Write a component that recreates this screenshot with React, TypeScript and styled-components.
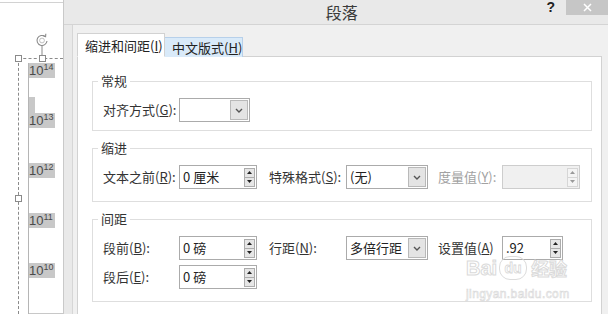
import * as React from 'react';
import styled, { createGlobalStyle } from 'styled-components';

const GlobalStyle = createGlobalStyle`
  html, body {
    margin: 0;
    padding: 0;
  }
  body {
    width: 608px;
    height: 314px;
    overflow: hidden;
    background: #fff;
    font-family: "Noto Sans CJK SC", "Noto Sans", sans-serif;
    color: #333;
  }
`;

const Screen = styled.div`
  display: flex;
  height: 314px;
  overflow: hidden;
`;

/* left: slide thumbnail pane */
const SlidePane = styled.div`
  position: relative;
  width: 63px;
  flex-shrink: 0;
  border-right: 1px solid #c9c9c9;
  background: #fff;
  overflow: hidden;
`;

const PrevSlideEdge = styled.div`
  height: 2px;
  border-bottom: 1px solid #d2d2d2;
`;

const AxisColumn = styled.div`
  margin: 60px 0 0 28px;
  border-left: 1px solid #b5b5b5;
  display: flex;
  flex-direction: column;
`;

const Tick = styled.div`
  height: 50px;
  display: flex;
  flex-direction: column;
  justify-content: space-between;
  align-items: flex-start;
`;

const Power = styled.span`
  background: #c8c8c8;
  color: #4a4a4a;
  font-family: "Liberation Sans", sans-serif;
  font-size: 13px;
  line-height: 15px;
  padding-right: 2px;

  sup {
    font-size: 9px;
    vertical-align: 5px;
    line-height: 0;
  }
`;

const Stub = styled.span`
  width: 6px;
  height: 16px;
  background: #c8c8c8;
`;

const BottomBlock = styled.div`
  height: 6px;
  background: #c8c8c8;
`;

const DashH = styled.div`
  position: absolute;
  left: 18px;
  right: 0;
  top: 58px;
  border-top: 1px dashed #8a8a8a;
`;

const DashV = styled.div`
  position: absolute;
  left: 18px;
  top: 58px;
  bottom: 0;
  border-left: 1px dashed #8a8a8a;
`;

const Handle = styled.div<{ $x: number; $y: number }>`
  position: absolute;
  left: ${(p) => p.$x - 3}px;
  top: ${(p) => p.$y - 3}px;
  width: 5px;
  height: 5px;
  background: #fff;
  border: 1px solid #8a8a8a;
`;

const RotateHandle = styled.svg`
  position: absolute;
  left: 35px;
  top: 33px;
`;

/* dialog */
const Dialog = styled.div`
  flex: 1;
  display: flex;
  flex-direction: column;
  background: #e9e9e9;
`;

const TitleBar = styled.div`
  height: 24px;
  flex-shrink: 0;
  display: flex;
  align-items: flex-start;
  border-bottom: 1px solid #d4d4d4;
`;

const Title = styled.div`
  flex: 1;
  text-align: center;
  padding-left: 73px;
  font-size: 16px;
  line-height: 24px;
  color: #3a3a3a;
`;

const Help = styled.div`
  font-family: "Liberation Sans", sans-serif;
  font-weight: bold;
  font-size: 14px;
  line-height: 15px;
  color: #222;
  margin-right: 11px;
`;

const CloseButton = styled.div`
  width: 42px;
  height: 15px;
  background: #c6c6c6;
  color: #fff;
  display: flex;
  align-items: center;
  justify-content: center;
`;

const Body = styled.div`
  flex: 1;
  margin-left: 8px;
  display: flex;
  flex-direction: column;
  background: #f0f0f0;
  border-left: 1px solid #d6d6d6;
  padding: 8px 6px 0 4px;
  min-height: 0;
`;

const Tabs = styled.div`
  display: flex;
  align-items: flex-end;
  height: 24px;
  margin-bottom: -1px;
  position: relative;
  z-index: 1;
`;

const Tab = styled.div<{ $active?: boolean }>`
  box-sizing: border-box;
  width: ${(p) => (p.$active ? 88 : 78)}px;
  height: ${(p) => (p.$active ? 24 : 20)}px;
  padding-left: 7px;
  font-size: 13px;
  line-height: ${(p) => (p.$active ? 24 : 19)}px;
  color: #222;
  white-space: nowrap;
  background: ${(p) => (p.$active ? '#fff' : '#d9eaf9')};
  border: 1px solid ${(p) => (p.$active ? '#d2d2d2' : '#b7d0ea')};
  border-bottom: ${(p) => (p.$active ? '1px solid #fff' : 'none')};
  border-left: ${(p) => (p.$active ? '1px solid #d2d2d2' : 'none')};
`;

const Panel = styled.div`
  position: relative;
  flex: 1;
  background: #fff;
  border: 1px solid #d2d2d2;
  border-bottom: none;
  padding: 16px 9px 0 14px;
`;

const Group = styled.fieldset<{ $bottom: number }>`
  margin: 0 0 9px;
  padding: 9px 8px ${(p) => p.$bottom}px 10px;
  border: 1px solid #dedede;
  min-width: 0;
`;

const Legend = styled.legend`
  margin-left: -5px;
  padding: 0 3px;
  font-size: 13px;
  line-height: 16px;
  color: #333;
`;

const Rows = styled.div`
  display: grid;
  row-gap: 5px;
`;

const Row = styled.div`
  display: grid;
  grid-template-columns: 76px 90px 77px 92px 64px auto;
  align-items: center;
  height: 24px;
`;

const Label = styled.span<{ $disabled?: boolean }>`
  font-size: 13px;
  line-height: 16px;
  white-space: nowrap;
  color: ${(p) => (p.$disabled ? '#a2a2a2' : '#333')};
`;

const Field = styled.div<{ $width: number; $disabled?: boolean }>`
  box-sizing: border-box;
  width: ${(p) => p.$width}px;
  height: 24px;
  display: flex;
  align-items: center;
  border: 1px solid ${(p) => (p.$disabled ? '#cdcdcd' : '#ababab')};
  background: ${(p) => (p.$disabled ? '#f0f0f0' : '#fff')};
`;

const FieldText = styled.span`
  flex: 1;
  padding-left: 3px;
  font-size: 13px;
  line-height: 16px;
  color: #222;
  white-space: nowrap;
`;

const SpinButtons = styled.div`
  display: flex;
  flex-direction: column;
  margin-right: 1px;
`;

const SpinButton = styled.div<{ $disabled?: boolean }>`
  box-sizing: border-box;
  width: 11px;
  height: 10px;
  display: flex;
  align-items: center;
  justify-content: center;
  background: ${(p) => (p.$disabled ? '#f4f4f4' : '#e6e6e6')};
  border: 1px solid ${(p) => (p.$disabled ? '#d6d6d6' : '#acacac')};

  & + & {
    margin-top: -1px;
  }
`;

const ArrowBox = styled.div`
  box-sizing: border-box;
  width: 18px;
  height: 20px;
  margin-right: 1px;
  display: flex;
  align-items: center;
  justify-content: center;
  background: #e4e4e4;
  border: 1px solid #b9b9b9;
`;

const Watermark = styled.div`
  position: absolute;
  left: 388px;
  top: 199px;
  display: flex;
  flex-direction: column;
  align-items: flex-start;
  pointer-events: none;
  color: rgba(255, 255, 255, 0.7);
  -webkit-text-stroke: 1px #dadada;
`;

const Brand = styled.div`
  display: flex;
  align-items: center;
  gap: 2px;
  font-family: "Liberation Sans", sans-serif;
  font-size: 20px;
  line-height: 22px;
  font-weight: bold;
`;

const Paw = styled.span`
  display: inline-flex;
  align-items: center;
  justify-content: center;
  width: 26px;
  height: 22px;
  border: 1px solid #dcdcdc;
  border-radius: 11px;
  font-size: 14px;
  -webkit-text-stroke: 0.8px #d8d8d8;
`;

const BrandCjk = styled.span`
  font-family: "Noto Sans CJK SC", sans-serif;
  font-size: 18px;
  margin-left: 2px;
`;

const Url = styled.div`
  margin-top: 8px;
  font-family: "Liberation Sans", sans-serif;
  font-size: 12px;
  line-height: 12px;
  letter-spacing: 0.4px;
  -webkit-text-stroke: 0.6px #d8d8d8;
`;

const Chevron = () => (
  <svg width="8" height="5" viewBox="0 0 8 5">
    <polyline points="1,1 4,4 7,1" fill="none" stroke="#555" strokeWidth="1.4" />
  </svg>
);

const Triangle = ({ up, disabled }: { up?: boolean; disabled?: boolean }) => (
  <svg width="5" height="3" viewBox="0 0 5 3">
    <polygon points={up ? '0,3 2.5,0 5,3' : '0,0 2.5,3 5,0'} fill={disabled ? '#9a9a9a' : '#222'} />
  </svg>
);

const Spin = ({ value, width, disabled }: { value?: string; width: number; disabled?: boolean }) => (
  <Field $width={width} $disabled={disabled}>
    <FieldText>{value}</FieldText>
    <SpinButtons>
      <SpinButton $disabled={disabled}>
        <Triangle up disabled={disabled} />
      </SpinButton>
      <SpinButton $disabled={disabled}>
        <Triangle disabled={disabled} />
      </SpinButton>
    </SpinButtons>
  </Field>
);

const Select = ({ value, width }: { value?: string; width: number }) => (
  <Field $width={width}>
    <FieldText>{value}</FieldText>
    <ArrowBox>
      <Chevron />
    </ArrowBox>
  </Field>
);

const powers = ['14', '13', '12', '11', '10'];

export default function App() {
  return (
    <>
      <GlobalStyle />
      <Screen>
        <SlidePane>
          <PrevSlideEdge />
          <AxisColumn>
            {powers.map((p, i) => (
              <Tick key={p}>
                <Power>
                  10<sup>{p}</sup>
                </Power>
                {i === 0 ? <Stub /> : null}
              </Tick>
            ))}
            <BottomBlock />
          </AxisColumn>
          <DashH />
          <DashV />
          <RotateHandle width="14" height="25" viewBox="0 0 14 25">
            <path d="M10.2 3.6 A5 5 0 1 0 12 8" fill="none" stroke="#8a8a8a" strokeWidth="1.1" />
            <polyline points="7.8,2.6 10.6,3.8 10.8,0.8" fill="none" stroke="#8a8a8a" strokeWidth="1.1" />
            <circle cx="7" cy="7.5" r="2.4" fill="none" stroke="#b0b0b0" strokeWidth="0.8" />
            <line x1="7" y1="12.5" x2="7" y2="23" stroke="#8a8a8a" strokeWidth="1" />
          </RotateHandle>
          <Handle $x={18} $y={58} />
          <Handle $x={42} $y={58} />
          <Handle $x={18} $y={198} />
        </SlidePane>

        <Dialog>
          <TitleBar>
            <Title>段落</Title>
            <Help>?</Help>
            <CloseButton>
              <svg width="9" height="9" viewBox="0 0 9 9">
                <path d="M1 1 L8 8 M8 1 L1 8" stroke="#fff" strokeWidth="1.5" />
              </svg>
            </CloseButton>
          </TitleBar>

          <Body>
            <Tabs>
              <Tab $active>
                缩进和间距(<u>I</u>)
              </Tab>
              <Tab>
                中文版式(<u>H</u>)
              </Tab>
            </Tabs>

            <Panel>
              <Group $bottom={8}>
                <Legend>常规</Legend>
                <Row>
                  <Label>
                    对齐方式(<u>G</u>):
                  </Label>
                  <Select width={71} />
                </Row>
              </Group>

              <Group $bottom={12}>
                <Legend>缩进</Legend>
                <Row>
                  <Label>
                    文本之前(<u>R</u>):
                  </Label>
                  <Spin value="0 厘米" width={78} />
                  <Label>
                    特殊格式(<u>S</u>):
                  </Label>
                  <Select value="(无)" width={82} />
                  <Label $disabled>
                    度量值(<u>Y</u>):
                  </Label>
                  <Spin width={78} disabled />
                </Row>
              </Group>

              <Group $bottom={12}>
                <Legend>间距</Legend>
                <Rows>
                  <Row>
                    <Label>
                      段前(<u>B</u>):
                    </Label>
                    <Spin value="0 磅" width={78} />
                    <Label>
                      行距(<u>N</u>):
                    </Label>
                    <Select value="多倍行距" width={82} />
                    <Label>
                      设置值(<u>A</u>)
                    </Label>
                    <Spin value=".92" width={61} />
                  </Row>
                  <Row>
                    <Label>
                      段后(<u>E</u>):
                    </Label>
                    <Spin value="0 磅" width={78} />
                  </Row>
                </Rows>
              </Group>

              <Watermark>
                <Brand>
                  Bai
                  <Paw>du</Paw>
                  <BrandCjk>经验</BrandCjk>
                </Brand>
                <Url>jingyan.baidu.com</Url>
              </Watermark>
            </Panel>
          </Body>
        </Dialog>
      </Screen>
    </>
  );
}
